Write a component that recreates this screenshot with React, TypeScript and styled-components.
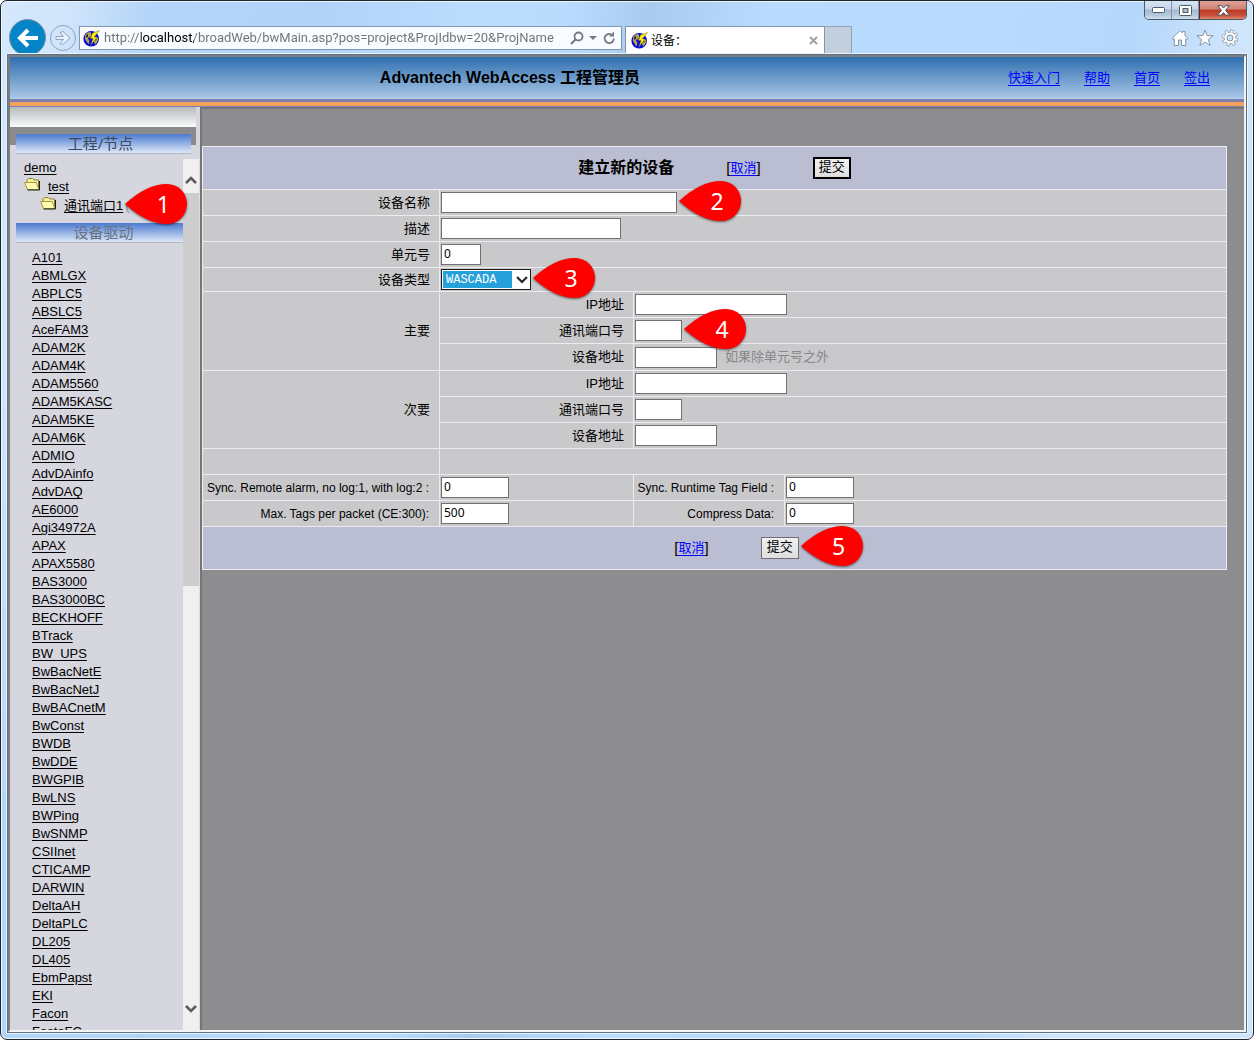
import React from "react";
import styled, { createGlobalStyle } from "styled-components";

const sans = `"Liberation Sans", "Noto Sans CJK SC", sans-serif`;
const ui = `"Noto Sans", "Noto Sans CJK SC", sans-serif`;

const GlobalStyle = createGlobalStyle`
  *, *::before, *::after { box-sizing: border-box; }
  body { margin: 0; background: #fff; font-family: ${sans}; font-size: 13px; color: #000; }
  button, input, select { font-family: inherit; margin: 0; }
`;

/* ---------- browser window ---------- */

const Window = styled.div`
  height: 100vh;
  display: flex;
  flex-direction: column;
  border: 1px solid #20242c;
  border-radius: 7px;
  overflow: hidden;
  background: linear-gradient(100deg, #d6e8fc 0, #d0e4fb 70px, #b3d5f9 150px, #b0d3f8 320px,
    #badcfd 460px, #b9dbfd 560px, #a9cbee 640px, #b9dbfe 760px, #b7dafd 980px, #b4d7fb 1120px, #cfe5fc 1220px);
  box-shadow: inset 0 0 0 1px #ecf6ff;
`;

const TitleBar = styled.div`
  height: 18px;
  flex: none;
  display: flex;
  justify-content: flex-end;
  align-items: flex-start;
  padding-right: 6px;
`;

const Controls = styled.div`
  display: flex;
  height: 19px;
  border: 1px solid #4b5968;
  border-top: 0;
  border-radius: 0 0 5px 5px;
  overflow: hidden;
  flex: none;
`;

const ControlButton = styled.button<{ $wide?: boolean }>`
  width: ${(p) => (p.$wide ? 47 : 27)}px;
  padding: 0;
  border: 0;
  border-left: ${(p) => (p.$wide ? "1px solid #5c2a24" : "0")};
  border-right: ${(p) => (p.$wide ? "0" : "1px solid #8093a8")};
  display: flex;
  align-items: center;
  justify-content: center;
  background: ${(p) =>
    p.$wide
      ? "linear-gradient(#dea196 0, #cf8376 45%, #bc3a24 50%, #c8503a 80%, #dd8a6c 100%)"
      : "linear-gradient(#d7e5f3 0, #c4d5e7 45%, #a5b9cf 50%, #b5c9df 80%, #cfe0f0 100%)"};
`;

const Toolbar = styled.div`
  height: 34px;
  flex: none;
  display: flex;
  align-items: flex-start;
  padding: 0 14px 0 8px;
  overflow: hidden;
`;

const BackButton = styled.button`
  width: 37px;
  height: 37px;
  flex: none;
  padding: 0;
  border: 1px solid #77909f;
  border-radius: 50%;
  background: #0584c7;
  display: flex;
  align-items: center;
  justify-content: center;
`;

const ForwardButton = styled.button`
  width: 26px;
  height: 26px;
  flex: none;
  margin: 6px 3px 0 4px;
  padding: 0;
  border: 1px solid #8fa4bb;
  border-radius: 50%;
  background: transparent;
  display: flex;
  align-items: center;
  justify-content: center;
`;

const AddressBar = styled.div`
  flex: 0 1 543px;
  min-width: 120px;
  height: 24px;
  margin-top: 7px;
  padding: 0 5px 0 3px;
  border: 1px solid #8297ae;
  background: #f8fbff;
  display: flex;
  align-items: center;
`;

const AddressInput = styled.input`
  flex: 1;
  min-width: 0;
  height: 22px;
  margin-left: 4px;
  padding: 0;
  border: 0;
  outline: 0;
  font: 13px/22px Roboto, sans-serif;
  color: transparent;
  caret-color: #000;
  background: linear-gradient(90deg, #707274 37px, #000 37px, #000 90px, #707274 90px);
  -webkit-background-clip: text;
  background-clip: text;
`;

const GlyphButton = styled.button`
  flex: none;
  padding: 0;
  border: 0;
  background: transparent;
  display: flex;
  align-items: center;
`;

const AddressTools = styled.div`
  display: flex;
  align-items: center;
  gap: 5px;
`;

const Tab = styled.div`
  flex: 0 1 200px;
  height: 28px;
  margin: 7px 0 0 3px;
  padding: 0 6px 0 5px;
  border: 1px solid #8297ae;
  border-bottom: 0;
  background: #fff;
  display: flex;
  align-items: center;
  gap: 3px;
  font: 12px/18px ${ui};
`;

const TabTitle = styled.span`
  flex: 1;
`;

const NewTab = styled.button`
  width: 27px;
  height: 28px;
  flex: none;
  margin-top: 7px;
  padding: 0;
  border: 1px solid #8fa2b8;
  border-left: 0;
  border-bottom: 0;
  background: #c3cfdc;
`;

const BrowserTools = styled.div`
  margin: 10px 0 0 auto;
  display: flex;
  gap: 7px;
`;

const Page = styled.div`
  flex: 1;
  min-height: 0;
  margin: 1px 6px 6px;
  border: 1px solid #5d7186;
  box-shadow: 0 0 0 1px #eaf4fe;
  display: flex;
`;

const PageInner = styled.div`
  flex: 1;
  min-width: 0;
  display: flex;
  flex-direction: column;
  border-style: solid;
  border-width: 2px;
  border-color: #7c7d80 #f4f4f4 #f4f4f4 #7c7d80;
  background: #8d8d8f;
`;

/* ---------- site header ---------- */

const Header = styled.header`
  height: 42px;
  flex: none;
  display: flex;
  align-items: center;
  padding: 0 34px 0 2px;
  border-bottom: 1px solid #b9d0e4;
  background: linear-gradient(#2f6fb0, #a8c6e5);
`;

const SiteTitle = styled.h1`
  flex: 1;
  margin: 0;
  text-align: center;
  font-size: 16px;
  line-height: 20px;
  font-weight: bold;
`;

const Nav = styled.nav`
  display: flex;
  gap: 24px;
`;

const BlueLink = styled.a`
  color: #0000ff;
  font-size: 13px;
  line-height: 18px;
  text-decoration: underline;
  text-underline-offset: 3px;
`;

const Stripe = styled.div`
  height: 8px;
  flex: none;
  background: linear-gradient(#7b80b0 0 3px, #f4a15c 3px 7px, #7b80b0 7px);
`;

const Body = styled.div`
  flex: 1;
  min-height: 0;
  display: flex;
`;

/* ---------- sidebar ---------- */

const Sidebar = styled.aside`
  width: 190px;
  flex: none;
  display: flex;
  flex-direction: column;
  overflow: hidden;
  background: #d6d6df;
`;

const SidebarTop = styled.div`
  flex: none;
  padding: 27px 9px 5px 6px;
  background: linear-gradient(#b5babb, #fafcfc) 0 0 / 186px 20px no-repeat,
    linear-gradient(#8b8b8d, #8b8b8d) 0 20px / 186px 18px no-repeat;
`;

const SectionTitle = styled.h2<{ $muted?: boolean }>`
  margin: 0;
  height: 20px;
  text-align: center;
  font-family: ${ui};
  font-size: 15px;
  line-height: 18px;
  font-weight: normal;
  color: ${(p) => (p.$muted ? "#68727f" : "#3c4a5c")};
  padding-right: ${(p) => (p.$muted ? 0 : 6)}px;
  padding-left: ${(p) => (p.$muted ? 8 : 0)}px;
  border-bottom: 1px solid #b4b6c2;
  background: linear-gradient(#4b7ad0, #dde8f8);
`;

const SidebarScroll = styled.div`
  flex: 1;
  min-height: 0;
  display: flex;
`;

const SidebarContent = styled.div`
  flex: 1;
  min-width: 0;
`;

const Tree = styled.ul`
  list-style: none;
  margin: 0 0 8px;
  padding: 0;
  display: flex;
  flex-direction: column;
  gap: 1px;
`;

const TreeItem = styled.li<{ $level: number }>`
  height: 18px;
  padding-left: ${(p) => 14 + p.$level}px;
  display: flex;
  align-items: center;
  white-space: nowrap;
`;

const TreeLabel = styled.div`
  display: flex;
  gap: 7px;
`;

const PortNote = styled.span`
  margin-left: 2px;
  line-height: 18px;
  color: #8a8a92;
`;

const BlackLink = styled.a`
  color: #000;
  line-height: 18px;
  text-decoration: underline;
  text-underline-offset: 2px;
`;

const DriverSection = styled.div`
  padding-left: 6px;
`;

const DriverList = styled.ul`
  list-style: none;
  margin: 6px 0 0;
  padding: 0 0 0 16px;
`;

const DriverItem = styled.li`
  height: 18px;
  line-height: 18px;
`;

const ScrollBar = styled.div`
  width: 17px;
  flex: none;
  display: flex;
  flex-direction: column;
  background: #f0f0f0;
  border-right: 1px solid #dcdce2;
`;

const ScrollButton = styled.button<{ $down?: boolean }>`
  height: 34px;
  flex: none;
  padding: ${(p) => (p.$down ? "0 0 8px" : "8px 0 0")};
  border: 0;
  background: transparent;
  display: flex;
  align-items: center;
  justify-content: center;
`;

const ScrollThumb = styled.div`
  flex: 0 1 393px;
  background: #cdcdcd;
`;

const ScrollGap = styled.div`
  flex: 1;
`;

/* ---------- form ---------- */

const Main = styled.main`
  flex: 1;
  min-width: 0;
  padding: 37px 17px 0 0;
  border-top: 2px solid #757577;
  border-left: 2px solid #757577;
`;

const FormTable = styled.table`
  width: 100%;
  table-layout: fixed;
  border-collapse: collapse;
  background: #c9c9cb;
`;

const Col = styled.col<{ $w?: number }>`
  width: ${(p) => (p.$w ? p.$w + "px" : "auto")};
`;

const Row = styled.tr<{ $h?: number }>`
  height: ${(p) => p.$h ?? 26}px;
`;

const Cell = styled.td`
  border: 1px solid #ececf0;
  padding: 0 1px;
  vertical-align: middle;
  line-height: 16px;
`;

const LabelCell = styled.th`
  border: 1px solid #ececf0;
  padding: 0 9px 0 0;
  text-align: right;
  vertical-align: middle;
  font-weight: normal;
  font-size: 13px;
  line-height: 16px;
  white-space: nowrap;
`;

const SmallLabel = styled.label`
  font-size: 12px;
  padding-right: 1px;
`;

const BandCell = styled(Cell)`
  background: #bbbed2;
`;

const Band = styled.div<{ $shift?: boolean }>`
  display: flex;
  align-items: center;
  justify-content: center;
  gap: 52px;
  padding-left: ${(p) => (p.$shift ? 44 : 0)}px;
`;

const FormTitle = styled.h2`
  margin: 0;
  font-size: 16px;
  line-height: 20px;
`;

const Cancel = styled.span`
  display: flex;
  align-items: center;
  font-size: 15px;
  line-height: 18px;
`;

const Anchor = styled.div`
  position: relative;
  display: flex;
  width: max-content;
`;

const SubmitButton = styled.button<{ $strong?: boolean }>`
  width: 38px;
  height: 22px;
  padding: 0 0 4px;
  border: ${(p) => (p.$strong ? "2px solid #000" : "1px solid #707070")};
  background: linear-gradient(#f0f0f0, #dfdfdf);
  color: #000;
  font-family: ${ui};
  font-size: 13px;
  line-height: 14px;
`;

const Field = styled.input<{ $w: number }>`
  width: ${(p) => p.$w}px;
  height: 21px;
  padding: 0 2px 2px;
  border: 1px solid #707070;
  border-radius: 0;
  background: #fff;
  font-family: ${ui};
  font-size: 12px;
  line-height: 16px;
  color: #000;
  display: block;
`;

const Select = styled.select`
  appearance: none;
  width: 90px;
  height: 21px;
  padding: 0 4px;
  border: 1px solid #1c1c1c;
  border-radius: 0;
  background: linear-gradient(#26a0da, #26a0da) 1px 1px / 69px 17px no-repeat, #fff;
  color: #fff;
  font-family: "Liberation Mono", monospace;
  font-size: 12px;
  line-height: 16px;
`;

const SelectArrow = styled.svg`
  position: absolute;
  right: 3px;
  top: 7px;
  pointer-events: none;
`;

const WithHint = styled.div`
  display: flex;
  align-items: center;
  gap: 8px;
`;

const Hint = styled.span`
  color: #87878a;
`;

/* ---------- numbered callouts ---------- */

const PinBox = styled.span`
  position: absolute;
  left: calc(100% + 2px);
  top: 50%;
  width: 62px;
  height: 40px;
  margin-top: -22px;
  z-index: 2;
  display: flex;
  align-items: center;
  justify-content: center;
  padding-left: 14px;
  color: #fff;
  font-family: ${ui};
  font-size: 23px;
  line-height: 40px;
  pointer-events: none;
`;

const PinShape = styled.svg`
  position: absolute;
  inset: 0;
  z-index: -1;
  overflow: visible;
  filter: drop-shadow(0 1px 1px rgba(0, 0, 0, 0.55));
`;

const Pin = ({ n }: { n: number }) => (
  <PinBox>
    <PinShape width="62" height="40" viewBox="0 0 62 40">
      <path d="M0 20Q22 0 42 0A20 20 0 0 1 42 40Q22 40 0 20Z" fill="#fe0000" />
    </PinShape>
    {n}
  </PinBox>
);

/* ---------- drawings ---------- */

const Drawing = styled.svg`
  flex: none;
`;

const Globe = () => (
  <Drawing width="17" height="17" viewBox="0 0 17 17">
    <circle cx="8.2" cy="8.8" r="7.8" fill="#0505e6" />
    <path d="M2 5 4.500 2.500 7.500 2l1 3L7 8 6 7 5 8.500 6.500 11l-1 3.500-2-3L2 9z" fill="#b5a642" />
    <path d="M11 8l3-1 1.500 2-1.500 3.500-2 2-1-3z" fill="#b5a642" />
    <path d="M3 5.500l2-1.500v2.500L3.500 8zM12 9.500l1.500-.5-.5 2z" fill="#15152a" />
    <path d="M16.500.5 9.500 3 7.500 8.500h2.600L7.500 15.500 14 7h-2.800z" fill="#fff200" stroke="#6b6400" strokeWidth=".4" />
  </Drawing>
);

const Folder = () => (
  <Drawing width="17" height="13" viewBox="0 0 17 13">
    <path d="M3 4V2l1.500-1.500h4L10 2h4.500v9" fill="#f5ee9a" stroke="#8a8432" />
    <path d="M.7 4.500h11.500l2.600 7H3.500z" fill="#fffbb0" stroke="#a39a3c" />
    <path d="M3.500 12h12V3" fill="none" stroke="#1d1c10" />
  </Drawing>
);

const Chevron = ({ up }: { up?: boolean }) => (
  <svg width="12" height="10" viewBox="0 0 12 10">
    <path d={up ? "M1 8 6 3l5 5" : "M1 2l5 5 5-5"} fill="none" stroke="#5c5c5c" strokeWidth="2.600" />
  </svg>
);

const drivers = [
  "A101", "ABMLGX", "ABPLC5", "ABSLC5", "AceFAM3", "ADAM2K", "ADAM4K", "ADAM5560", "ADAM5KASC",
  "ADAM5KE", "ADAM6K", "ADMIO", "AdvDAinfo", "AdvDAQ", "AE6000", "Agi34972A", "APAX", "APAX5580",
  "BAS3000", "BAS3000BC", "BECKHOFF", "BTrack", "BW_UPS", "BwBacNetE", "BwBacNetJ", "BwBACnetM",
  "BwConst", "BWDB", "BwDDE", "BWGPIB", "BwLNS", "BWPing", "BwSNMP", "CSIInet", "CTICAMP",
  "DARWIN", "DeltaAH", "DeltaPLC", "DL205", "DL405", "EbmPapst", "EKI", "Facon", "FestoFC",
];

const CancelLink = () => (
  <Cancel>
    [<BlueLink href="#cancel">取消</BlueLink>]
  </Cancel>
);

const Endpoint = ({ id, title, main }: { id: string; title: string; main?: boolean }) => (
  <>
    <Row>
      <LabelCell rowSpan={3} scope="rowgroup">{title}</LabelCell>
      <LabelCell><label htmlFor={id + "-ip"}>IP地址</label></LabelCell>
      <Cell colSpan={2}><Field id={id + "-ip"} $w={152} /></Cell>
    </Row>
    <Row>
      <LabelCell><label htmlFor={id + "-port"}>通讯端口号</label></LabelCell>
      <Cell colSpan={2}>
        <Anchor>
          <Field id={id + "-port"} $w={47} />
          {main && <Pin n={4} />}
        </Anchor>
      </Cell>
    </Row>
    <Row $h={main ? 27 : 26}>
      <LabelCell><label htmlFor={id + "-addr"}>设备地址</label></LabelCell>
      <Cell colSpan={2}>
        <WithHint>
          <Field id={id + "-addr"} $w={82} />
          {main && <Hint>如果除单元号之外</Hint>}
        </WithHint>
      </Cell>
    </Row>
  </>
);

export default function App() {
  return (
    <>
      <GlobalStyle />
      <Window>
        <TitleBar>
          <Controls>
            <ControlButton aria-label="最小化">
              <svg width="13" height="6"><rect x=".5" y=".5" width="12" height="5" rx="1" fill="#fff" stroke="#4f5a68" /></svg>
            </ControlButton>
            <ControlButton aria-label="最大化">
              <svg width="13" height="11">
                <rect x=".5" y=".5" width="12" height="10" rx="1" fill="#fff" stroke="#4f5a68" />
                <rect x="4" y="3.500" width="5" height="4" fill="#a9bcd0" stroke="#4f5a68" />
              </svg>
            </ControlButton>
            <ControlButton $wide aria-label="关闭">
              <svg width="13" height="11" viewBox="0 0 13 11">
                <path d="M.7.700h3.600l2.200 2.400L8.700.700h3.600L8.500 5.300l4 4.900H8.800L6.500 7.600l-2.300 2.600H.5l4-4.900z" fill="#fff" stroke="#47505e" />
              </svg>
            </ControlButton>
          </Controls>
        </TitleBar>

        <Toolbar>
          <BackButton aria-label="后退">
            <svg width="22" height="20" viewBox="0 0 22 20">
              <path d="M21 10H4M11 2l-8 8 8 8" fill="none" stroke="#fff" strokeWidth="4" />
            </svg>
          </BackButton>
          <ForwardButton aria-label="前进">
            <svg width="16" height="16" viewBox="0 0 16 16">
              <path d="M1 6.500h7.500L5 2.500l3-1 7 6.500-7 6.500-3-1 3.500-4H1z" fill="#e8f2fc" stroke="#8fa4bb" />
            </svg>
          </ForwardButton>
          <AddressBar>
            <Globe />
            <AddressInput
              aria-label="地址"
              defaultValue="http://localhost/broadWeb/bwMain.asp?pos=project&ProjIdbw=20&ProjName"
            />
            <AddressTools>
              <GlyphButton aria-label="搜索">
                <svg width="14" height="14" viewBox="0 0 14 14">
                  <circle cx="8.500" cy="5.500" r="4" fill="none" stroke="#757a80" strokeWidth="1.800" />
                  <path d="M5.500 8.500 1 13" stroke="#757a80" strokeWidth="2.200" />
                </svg>
              </GlyphButton>
              <GlyphButton aria-label="历史记录">
                <svg width="8" height="5"><path d="M0 0h8L4 4z" fill="#757a80" /></svg>
              </GlyphButton>
              <GlyphButton aria-label="刷新">
                <svg width="14" height="14" viewBox="0 0 14 14">
                  <path d="M11.800 7.500A4.600 4.600 0 1 1 9 3.300" fill="none" stroke="#757a80" strokeWidth="1.800" />
                  <path d="M7 5.500h5V.5z" fill="#757a80" />
                </svg>
              </GlyphButton>
            </AddressTools>
          </AddressBar>
          <Tab>
            <Globe />
            <TabTitle>设备：</TabTitle>
            <GlyphButton aria-label="关闭标签页">
              <svg width="9" height="9"><path d="M1 1l7 7M8 1 1 8" stroke="#a2a2a2" strokeWidth="2" /></svg>
            </GlyphButton>
          </Tab>
          <NewTab aria-label="新建标签页" />
          <BrowserTools>
            <GlyphButton aria-label="主页">
              <svg width="18" height="18" viewBox="0 0 18 18">
                <path d="M1 9.500 9 1.500l2.500 2.500V2.500h2.500v4l3 3-1.300 1.200-1-.9v6.700h-4.200V11H7.500v5.500H3.300V9.800l-1 .9z" fill="#fff" stroke="#8493a4" />
              </svg>
            </GlyphButton>
            <GlyphButton aria-label="收藏夹">
              <svg width="18" height="18" viewBox="0 0 18 18">
                <path d="M9 1l2.100 5.600 6 .2-4.700 3.700 1.700 5.900L9 13.100l-5.100 3.300 1.700-5.900L.9 6.800l6-.2z" fill="#fff" stroke="#8493a4" />
              </svg>
            </GlyphButton>
            <GlyphButton aria-label="工具">
              <svg width="18" height="18" viewBox="0 0 18 18">
                <circle cx="9" cy="9" r="6.700" fill="none" stroke="#8493a4" strokeWidth="3.400" strokeDasharray="3 2.262" />
                <circle cx="9" cy="9" r="6" fill="#fff" stroke="#8493a4" />
                <circle cx="9" cy="9" r="6.600" fill="none" stroke="#fff" strokeWidth="2.200" strokeDasharray="2 3.184" strokeDashoffset="-.5" />
                <circle cx="9" cy="9" r="3" fill="#cfe3f8" stroke="#8493a4" />
              </svg>
            </GlyphButton>
          </BrowserTools>
        </Toolbar>

        <Page>
          <PageInner>
            <Header>
              <SiteTitle>Advantech WebAccess 工程管理员</SiteTitle>
              <Nav>
                <BlueLink href="#start">快速入门</BlueLink>
                <BlueLink href="#help">帮助</BlueLink>
                <BlueLink href="#home">首页</BlueLink>
                <BlueLink href="#logout">签出</BlueLink>
              </Nav>
            </Header>
            <Stripe />
            <Body>
              <Sidebar>
                <SidebarTop>
                  <SectionTitle>工程/节点</SectionTitle>
                </SidebarTop>
                <SidebarScroll>
                  <SidebarContent>
                    <Tree>
                      <TreeItem $level={0}><BlackLink href="#demo">demo</BlackLink></TreeItem>
                      <TreeItem $level={0}>
                        <TreeLabel>
                          <Folder />
                          <BlackLink href="#test">test</BlackLink>
                        </TreeLabel>
                      </TreeItem>
                      <TreeItem $level={16}>
                        <TreeLabel>
                          <Folder />
                          <Anchor>
                            <BlackLink href="#port1">通讯端口1</BlackLink>
                            <Pin n={1} />
                          </Anchor>
                        </TreeLabel>
                        <PortNote>(o</PortNote>
                      </TreeItem>
                    </Tree>
                    <DriverSection>
                      <SectionTitle $muted>设备驱动</SectionTitle>
                      <DriverList>
                        {drivers.map((d) => (
                          <DriverItem key={d}><BlackLink href={"#" + d}>{d}</BlackLink></DriverItem>
                        ))}
                      </DriverList>
                    </DriverSection>
                  </SidebarContent>
                  <ScrollBar>
                    <ScrollButton aria-label="向上滚动"><Chevron up /></ScrollButton>
                    <ScrollThumb />
                    <ScrollGap />
                    <ScrollButton $down aria-label="向下滚动"><Chevron /></ScrollButton>
                  </ScrollBar>
                </SidebarScroll>
              </Sidebar>

              <Main>
                <form onSubmit={(e) => e.preventDefault()}>
                  <FormTable>
                    <colgroup>
                      <Col $w={237} />
                      <Col $w={194} />
                      <Col $w={151} />
                      <Col />
                    </colgroup>
                    <tbody>
                      <Row $h={43}>
                        <BandCell colSpan={4}>
                          <Band>
                            <FormTitle>建立新的设备</FormTitle>
                            <CancelLink />
                            <SubmitButton $strong type="submit">提交</SubmitButton>
                          </Band>
                        </BandCell>
                      </Row>
                      <Row>
                        <LabelCell><label htmlFor="name">设备名称</label></LabelCell>
                        <Cell colSpan={3}><Anchor><Field id="name" $w={236} /><Pin n={2} /></Anchor></Cell>
                      </Row>
                      <Row>
                        <LabelCell><label htmlFor="desc">描述</label></LabelCell>
                        <Cell colSpan={3}><Field id="desc" $w={180} /></Cell>
                      </Row>
                      <Row>
                        <LabelCell><label htmlFor="unit">单元号</label></LabelCell>
                        <Cell colSpan={3}><Field id="unit" $w={40} defaultValue="0" /></Cell>
                      </Row>
                      <Row $h={24}>
                        <LabelCell><label htmlFor="type">设备类型</label></LabelCell>
                        <Cell colSpan={3}>
                          <Anchor>
                            <Select id="type" defaultValue="WASCADA">
                              <option>WASCADA</option>
                            </Select>
                            <SelectArrow width="12" height="8" viewBox="0 0 12 8">
                              <path d="M1 1l5 5 5-5" fill="none" stroke="#222" strokeWidth="2" />
                            </SelectArrow>
                            <Pin n={3} />
                          </Anchor>
                        </Cell>
                      </Row>
                      <Endpoint id="primary" title="主要" main />
                      <Endpoint id="secondary" title="次要" />
                      <Row>
                        <Cell />
                        <Cell colSpan={3} />
                      </Row>
                      <Row>
                        <LabelCell><SmallLabel htmlFor="alarm">Sync. Remote alarm, no log:1, with log:2 :</SmallLabel></LabelCell>
                        <Cell><Field id="alarm" $w={68} defaultValue="0" /></Cell>
                        <LabelCell><SmallLabel htmlFor="tagfield">Sync. Runtime Tag Field :</SmallLabel></LabelCell>
                        <Cell><Field id="tagfield" $w={68} defaultValue="0" /></Cell>
                      </Row>
                      <Row>
                        <LabelCell><SmallLabel htmlFor="tags">Max. Tags per packet (CE:300):</SmallLabel></LabelCell>
                        <Cell><Field id="tags" $w={68} defaultValue="500" /></Cell>
                        <LabelCell><SmallLabel htmlFor="compress">Compress Data:</SmallLabel></LabelCell>
                        <Cell><Field id="compress" $w={68} defaultValue="0" /></Cell>
                      </Row>
                      <Row $h={43}>
                        <BandCell colSpan={4}>
                          <Band $shift>
                            <CancelLink />
                            <Anchor><SubmitButton type="submit">提交</SubmitButton><Pin n={5} /></Anchor>
                          </Band>
                        </BandCell>
                      </Row>
                    </tbody>
                  </FormTable>
                </form>
              </Main>
            </Body>
          </PageInner>
        </Page>
      </Window>
    </>
  );
}
